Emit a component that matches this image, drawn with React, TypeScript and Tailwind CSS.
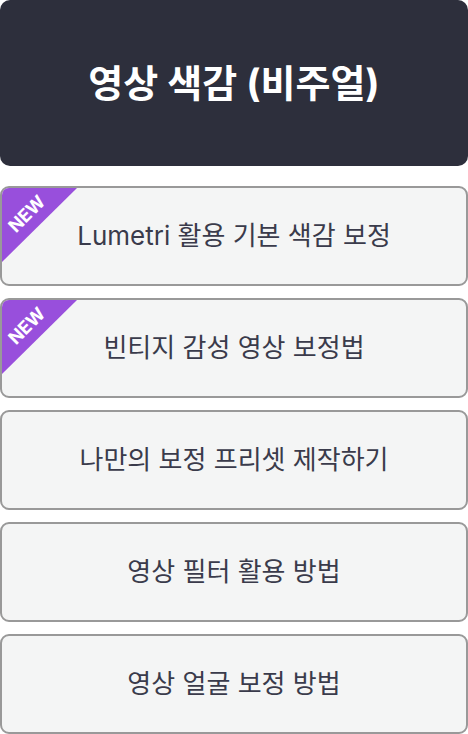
const items = [
  { label: 'Lumetri 활용 기본 색감 보정', isNew: true },
  { label: '빈티지 감성 영상 보정법', isNew: true },
  { label: '나만의 보정 프리셋 제작하기', isNew: false },
  { label: '영상 필터 활용 방법', isNew: false },
  { label: '영상 얼굴 보정 방법', isNew: false },
];

export default function App() {
  return (
    <div className="w-[468px] bg-white" style={{ fontFamily: 'Inter, "Noto Sans CJK KR", sans-serif' }}>
      <div className="h-[166px] rounded-[10px] bg-[#2d2f3c] flex items-center justify-center">
        <h1 className="text-[38px] font-bold text-white leading-none">영상 색감 (비주얼)</h1>
      </div>

      <div className="mt-[20px] flex flex-col gap-[12px]">
        {items.map((item) => (
          <div
            key={item.label}
            className="relative h-[100px] overflow-hidden rounded-[9px] border-2 border-[#999999] bg-[#f4f5f5] flex items-center justify-center"
          >
            {item.isNew && (
              <div className="absolute left-0 top-0 w-[75px] h-[74px] bg-[#984fdc] [clip-path:polygon(0_0,100%_0,0_100%)]">
                <span className="absolute left-[-3px] top-[17px] w-[56px] text-center -rotate-45 text-[18px] font-bold text-white leading-none">
                  NEW
                </span>
              </div>
            )}
            <span className="text-[26px] text-[#3a3b4b] leading-none">{item.label}</span>
          </div>
        ))}
      </div>
    </div>
  );
}
